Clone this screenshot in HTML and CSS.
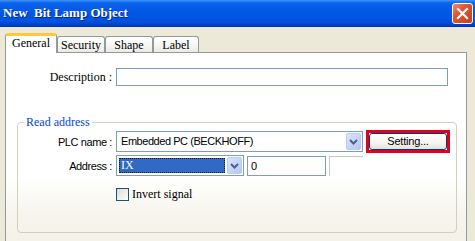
FILE: index.html
```html
<!DOCTYPE html>
<html lang="en">
<head>
    <meta charset="UTF-8">
    <title>New Bit Lamp Object</title>
    <link rel="stylesheet" href="styles.css">
</head>
<body>
    <div class="window">
        <div class="titlebar">
            <span class="title">New&nbsp; Bit Lamp Object</span>
            <span class="close">
                <svg width="13" height="13" viewBox="0 0 13 13"><path d="M2 2 L11 11 M11 2 L2 11" stroke="#fff" stroke-width="2.2" stroke-linecap="square"/></svg>
            </span>
        </div>

        <div class="client">
            <div class="tabs">
                <div class="tab active">General</div>
                <div class="tab">Security</div>
                <div class="tab">Shape</div>
                <div class="tab">Label</div>
            </div>

            <div class="panel">
                <div class="desc-row">
                    <label class="lbl serif desc-lbl">Description :</label>
                    <div class="textbox desc-box"></div>
                </div>

                <fieldset class="group">
                    <legend>Read address</legend>

                    <div class="row plc-row">
                        <label class="lbl sans">PLC name :</label>
                        <div class="combo plc-combo">
                            <span class="combo-text">Embedded PC (BECKHOFF)</span>
                            <span class="combo-btn">
                                <svg width="9" height="6" viewBox="0 0 9 6"><path d="M1 1 L4.5 4.5 L8 1" fill="none" stroke="#4d6185" stroke-width="2"/></svg>
                            </span>
                        </div>
                        <div class="mark">
                            <button class="btn">Setting...</button>
                        </div>
                    </div>

                    <div class="row addr-row">
                        <label class="lbl sans">Address :</label>
                        <div class="combo addr-combo">
                            <span class="combo-text selected">IX</span>
                            <span class="combo-btn">
                                <svg width="9" height="6" viewBox="0 0 9 6"><path d="M1 1 L4.5 4.5 L8 1" fill="none" stroke="#4d6185" stroke-width="2"/></svg>
                            </span>
                        </div>
                        <div class="textbox num-box">0</div>
                        <div class="ghost-box"></div>
                    </div>

                    <div class="row check-row">
                        <span class="checkbox"></span>
                        <span class="serif">Invert signal</span>
                    </div>
                </fieldset>
            </div>
        </div>
    </div>
</body>
</html>
```

FILE: styles.css
```css
/* Basic Reset */
html, body {
    margin: 0;
    padding: 0;
}
body {
    width: 475px;
    height: 241px;
    overflow: hidden;
    background: #ece9d8;
    font-family: 'Liberation Serif', serif;
    font-size: 12px;
    color: #000;
}
.serif {
    font-family: 'Liberation Serif', serif;
    font-size: 12px;
}
.sans {
    font-family: 'Liberation Sans', Arial, sans-serif;
    font-size: 11px;
    letter-spacing: -0.4px;
}

/* Title bar */
.titlebar {
    height: 27px;
    display: flex;
    align-items: center;
    justify-content: space-between;
    padding: 0 2px 0 3px;
    box-sizing: border-box;
    background: linear-gradient(to bottom, #3d95ff 0, #0a62ea 3px, #0058e6 45%, #0052e0 80%, #0042c8 92%, #0032b0 100%);
}
.title {
    color: #fff;
    font-weight: bold;
    font-size: 13px;
    text-shadow: 1px 1px 0 #0b1f8a;
    padding-bottom: 1px;
}
.close {
    width: 21px;
    height: 21px;
    box-sizing: border-box;
    border: 1px solid #fff;
    border-radius: 3px;
    background: linear-gradient(135deg, #f08c6a 0, #e0532f 40%, #c7401f 100%);
    display: flex;
    align-items: center;
    justify-content: center;
}

/* Client area */
.client {
    padding: 6px 8px 0 5px;
}

/* Tabs */
.tabs {
    display: flex;
    align-items: flex-end;
    height: 20px;
    margin-bottom: -1px;
    position: relative;
    z-index: 1;
}
.tab {
    box-sizing: border-box;
    height: 16px;
    margin-bottom: 1px;
    border: 1px solid #919b9c;
    border-bottom: none;
    border-radius: 3px 3px 0 0;
    background: linear-gradient(to bottom, #fff 0, #f6f5f1 60%, #ebeae4 100%);
    text-align: center;
    line-height: 16px;
    font-size: 12px;
}
.tab:nth-child(2) { width: 48px; }
.tab:nth-child(3) { width: 48px; }
.tab:nth-child(4) { width: 46px; }
.tab.active {
    width: 52px;
    height: 20px;
    margin-bottom: 0;
    background: #fff;
    border-top: 3px solid #ffc83c;
    border-radius: 3px 3px 0 0;
    line-height: 15px;
    box-shadow: inset 0 -1px 0 #fff;
}

/* Panel */
.panel {
    height: 200px;
    box-sizing: border-box;
    border: 1px solid #919b9c;
    padding-top: 15px;
    background: linear-gradient(to bottom, #fff 0, #fff 62%, #fbfaf5 72%, #f6f4ec 82%, #f3f1e7 100%);
}

.desc-row {
    display: flex;
    align-items: center;
}
.lbl {
    text-align: right;
    margin-right: 4px;
}
.desc-lbl {
    width: 106px;
}
.textbox {
    box-sizing: border-box;
    border: 1px solid #7f9db9;
    background: #fff;
}
.desc-box {
    width: 332px;
    height: 18px;
}

/* Group box */
.group {
    margin: 29px 0 0 11px;
    width: 440px;
    height: 118px;
    box-sizing: border-box;
    padding: 0;
    border: 1px solid #d0d0bf;
    border-radius: 4px;
}
.group legend {
    margin-left: 6px;
    padding: 0 2px;
    line-height: 14px;
    color: #0046d5;
    font-size: 12px;
}

.row {
    display: flex;
    align-items: center;
}
.row .lbl {
    width: 94px;
}
.plc-row {
    margin-top: 1px;
}
.addr-row {
    margin-top: 2px;
}
.check-row {
    margin-top: 11px;
    padding-left: 98px;
}

/* Combo boxes */
.combo {
    box-sizing: border-box;
    height: 21px;
    border: 1px solid #7f9db9;
    background: #fff;
    display: flex;
    align-items: center;
    padding: 1px;
}
.plc-combo {
    width: 247px;
}
.addr-combo {
    width: 128px;
}
.combo-text {
    flex: 1;
    height: 17px;
    line-height: 17px;
    padding-left: 3px;
    font-family: 'Liberation Sans', Arial, sans-serif;
    font-size: 11px;
    letter-spacing: -0.45px;
    color: #000;
}
.combo-text.selected {
    box-sizing: border-box;
    height: 15px;
    line-height: 13px;
    margin: 0 2px 0 1px;
    padding-left: 1px;
    background: #316ac5;
    border: 1px dotted #1a1a1a;
    color: #fff;
    font-family: 'Liberation Serif', serif;
    font-size: 12px;
    letter-spacing: 0;
}
.combo-btn {
    box-sizing: border-box;
    width: 15px;
    height: 17px;
    border: 1px solid #b9cbf3;
    border-radius: 2px;
    background: linear-gradient(135deg, #dbe5fb 0, #c6d5f8 50%, #b4c7f4 100%);
    display: flex;
    align-items: center;
    justify-content: center;
}

/* Setting button with red mark */
.mark {
    margin-left: 3px;
    width: 84px;
    height: 23px;
    box-sizing: border-box;
    border: 3px solid #e2001a;
}
.btn {
    display: block;
    width: 100%;
    height: 100%;
    margin: 0;
    padding: 0;
    box-sizing: border-box;
    border: 1px solid #003c74;
    border-radius: 3px;
    background: linear-gradient(to bottom, #fff 0, #f5f4ef 60%, #e3e2da 100%);
    font-family: 'Liberation Sans', Arial, sans-serif;
    font-size: 11px;
    letter-spacing: -0.2px;
    color: #000;
    line-height: 13px;
}

/* Address extras */
.num-box {
    margin-left: 3px;
    width: 79px;
    height: 20px;
    line-height: 18px;
    padding-left: 3px;
    font-family: 'Liberation Sans', Arial, sans-serif;
    font-size: 11px;
}
.ghost-box {
    margin-left: 3px;
    width: 34px;
    height: 20px;
    box-sizing: border-box;
    border-top: 1px solid #c8c8c0;
    border-left: 1px solid #c8c8c0;
}

/* Checkbox */
.checkbox {
    width: 13px;
    height: 13px;
    box-sizing: border-box;
    border: 1px solid #1c5180;
    background: linear-gradient(135deg, #dcdcd4 0, #eeede8 50%, #fbfbf9 100%);
    margin-right: 3px;
}
```
